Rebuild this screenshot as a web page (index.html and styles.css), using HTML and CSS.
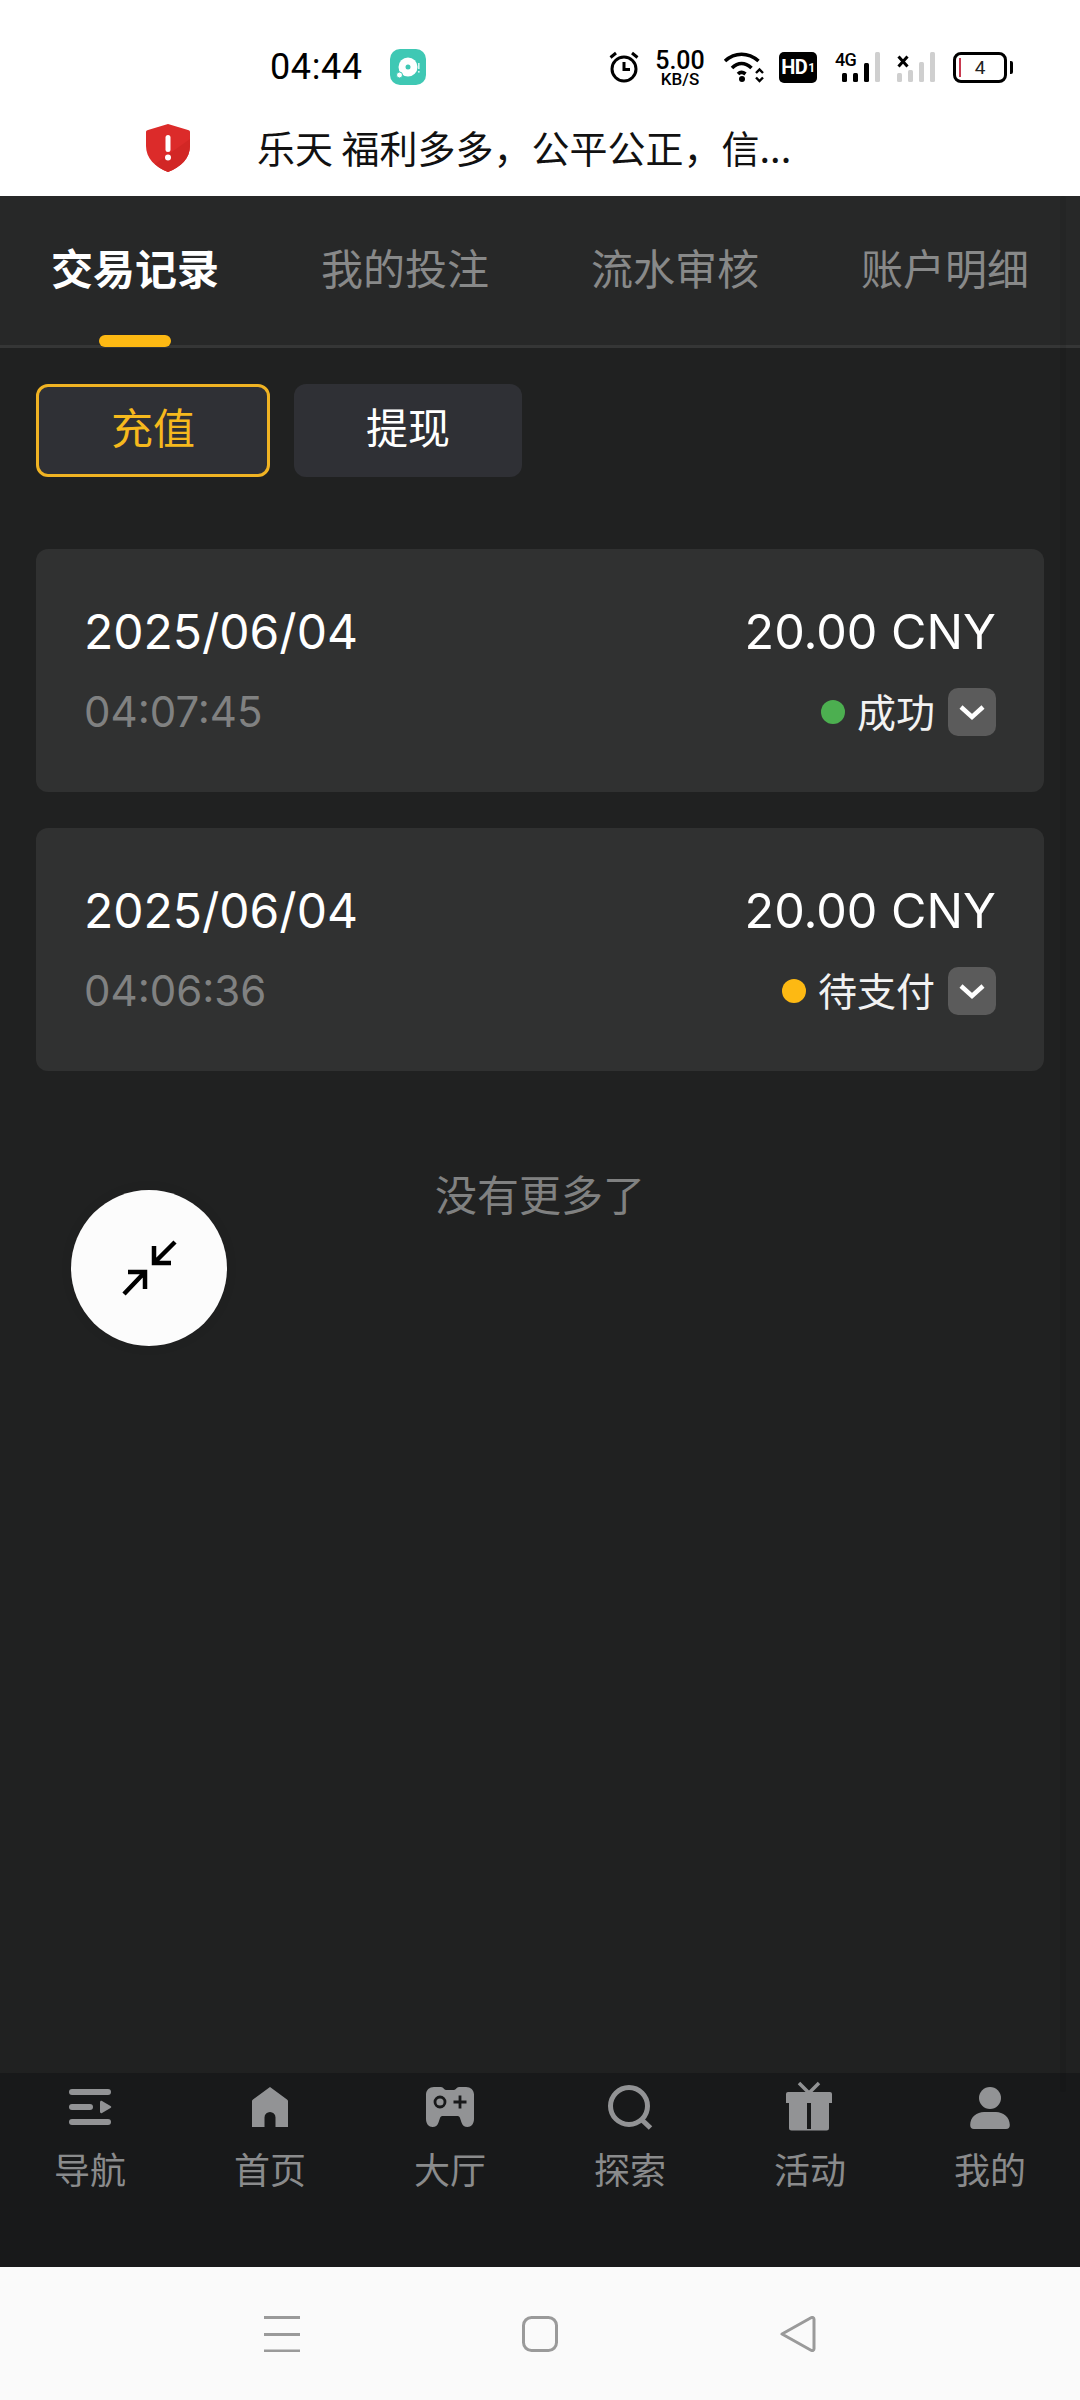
FILE: index.html
```html
<!DOCTYPE html>
<html lang="zh">
<head>
<meta charset="utf-8">
<title>交易记录</title>
<link rel="stylesheet" href="styles.css">
</head>
<body>
<div class="page">
  <header class="top">
    <div class="status">
      <div class="status-left">
        <span class="clock">04:44</span>
        <svg class="app-icon" viewBox="0 0 36 36"><rect width="36" height="36" rx="10" fill="#3fc8b4"/><circle cx="18" cy="18" r="9.5" fill="#fff"/><circle cx="18" cy="18" r="2.5" fill="#3fc8b4"/><circle cx="9.5" cy="26" r="3" fill="#fff" stroke="#3fc8b4" stroke-width="1"/><rect x="28" y="14" width="1.6" height="6" fill="#d8f5f0"/><rect x="28" y="22" width="1.6" height="1.6" fill="#d8f5f0"/></svg>
      </div>
      <div class="status-right">
        <svg class="i-alarm" viewBox="0 0 30 32"><circle cx="15" cy="18" r="12" fill="none" stroke="#000" stroke-width="3"/><path d="M15 11v7.5h6" fill="none" stroke="#000" stroke-width="3"/><path d="M1.5 6.500 7 2M28.500 6.500 23 2" stroke="#000" stroke-width="3"/></svg>
        <div class="speed"><span class="speed-n">5.00</span><span class="speed-u">KB/S</span></div>
        <svg class="i-wifi" viewBox="0 0 42 32"><path d="M2 10C12 1 25 1 35.500 10" fill="none" stroke="#000" stroke-width="3.600"/><path d="M9 17c6-6 13-6 19.500 0" fill="none" stroke="#000" stroke-width="3.600"/><path d="M15 23c2-2 5-2 7.500 0" fill="none" stroke="#000" stroke-width="3.600"/><circle cx="19" cy="28" r="3" fill="#000"/><path d="M33 22l3.500-3.500L40 22M33 26.500l3.500 3.500 3.500-3.500" fill="none" stroke="#000" stroke-width="2.400"/></svg>
        <div class="hd"><span>HD</span><span class="hd-1">1</span></div>
        <div class="sig">
          <span class="sig-4g">4G</span>
          <svg class="i-sig" viewBox="0 0 38 30"><rect x="0" y="21" width="5" height="9" rx="1.500"/><rect x="11" y="21" width="5" height="9" rx="1.500"/><rect x="22" y="11" width="5" height="19" rx="1.500"/><rect x="33" y="0" width="5" height="30" rx="1.500" fill="#cfcfcf"/></svg>
        </div>
        <svg class="i-sim2" viewBox="0 0 38 32"><path d="M1.500 5.500l9 10M10.500 5.500l-9 10" stroke="#000" stroke-width="3"/><rect x="0" y="22" width="5" height="9" rx="1.500" fill="#cfcfcf"/><rect x="11" y="19" width="5" height="12" rx="1.500" fill="#cfcfcf"/><rect x="22" y="11" width="5" height="20" rx="1.500" fill="#cfcfcf"/><rect x="33" y="1" width="5" height="30" rx="1.500" fill="#cfcfcf"/></svg>
        <div class="batt"><span class="batt-low"></span><span class="batt-n">4</span><span class="batt-cap"></span></div>
      </div>
    </div>
    <div class="notice">
      <svg class="shield" viewBox="0 0 44 48"><path d="M22 0l20 6c2 .6 2 1 2 3v13c0 12-9 21-22 26C9 43 0 34 0 22V9c0-2 0-2.400 2-3z" fill="#dc2b2a"/><path d="M44 15v7c0 12-9 21-22 26-5-2-9-4-13-8z" fill="#d22725"/><rect x="19.500" y="11" width="5" height="17" rx="2.500" fill="#fff"/><circle cx="22" cy="33.500" r="3" fill="#fff"/></svg>
      <span class="notice-text">乐天 福利多多，公平公正，信...</span>
    </div>
  </header>

  <nav class="tabs">
    <a class="tab tab-on">交易记录</a>
    <a class="tab">我的投注</a>
    <a class="tab">流水审核</a>
    <a class="tab">账户明细</a>
  </nav>

  <div class="subtabs">
    <button class="sub sub-on">充值</button>
    <button class="sub sub-off">提现</button>
  </div>

  <section class="cards">
    <article class="card">
      <div class="row"><span class="date">2025/06/04</span><span class="amount">20.00 CNY</span></div>
      <div class="row">
        <span class="time">04:07:45</span>
        <span class="state"><i class="dot dot-ok"></i><span class="state-t">成功</span><span class="chev"><svg viewBox="0 0 48 48"><path d="M13 19l11 10 11-10" fill="none" stroke="#fff" stroke-width="4.500"/></svg></span></span>
      </div>
    </article>
    <article class="card">
      <div class="row"><span class="date">2025/06/04</span><span class="amount">20.00 CNY</span></div>
      <div class="row">
        <span class="time">04:06:36</span>
        <span class="state"><i class="dot dot-wait"></i><span class="state-t">待支付</span><span class="chev"><svg viewBox="0 0 48 48"><path d="M13 19l11 10 11-10" fill="none" stroke="#fff" stroke-width="4.500"/></svg></span></span>
      </div>
    </article>
  </section>

  <p class="more">没有更多了</p>

  <nav class="bottom">
    <a class="item"><svg class="nav-i" viewBox="0 0 60 52"><rect x="9" y="8" width="42" height="6" rx="3"/><rect x="9" y="23" width="24" height="6" rx="3"/><path d="M40 21.500c0-1.500 1-2 2-1.500l8.500 5c1 .6 1 1.400 0 2L42 32c-1 .5-2 0-2-1.500z"/><rect x="9" y="38" width="42" height="6" rx="3"/></svg><span>导航</span></a>
    <a class="item"><svg class="nav-i" viewBox="0 0 60 52"><path fill-rule="evenodd" d="M30 6l17 12.500c.7.600 1 1 1 2V46H35.500v-9.500a5.500 5.500 0 0 0-11 0V46H12V20.500c0-1 .3-1.400 1-2z"/></svg><span>首页</span></a>
    <a class="item"><svg class="nav-i" viewBox="0 0 60 52"><path d="M14 6h7c2.500 0 3 3 5 3h8c2 0 2.500-3 5-3h7c4.500 0 8 3 8 7.500V38c0 5-3 8-6.500 8-3 0-5-1.500-6-4.500l-1.500-4.500c-.5-1.500-1.500-2-3-2H23c-1.500 0-2.500.5-3 2l-1.500 4.500c-1 3-3 4.500-6 4.500C9 46 6 43 6 38V13.500C6 9 9.500 6 14 6z"/><circle cx="20" cy="21" r="5" fill="none" stroke="#18191a" stroke-width="2.800"/><path d="M33.500 21h13M40 14.500v13" stroke="#18191a" stroke-width="2.800"/></svg><span>大厅</span></a>
    <a class="item"><svg class="nav-i" viewBox="0 0 60 52"><circle cx="29" cy="25" r="18.500" fill="none" stroke="#929395" stroke-width="5"/><path d="M41 38l9.500 9" stroke="#929395" stroke-width="5"/></svg><span>探索</span></a>
    <a class="item"><svg class="nav-i" viewBox="0 0 60 52"><path d="M19 2l10 10 10-10" fill="none" stroke="#929395" stroke-width="3.500"/><path d="M8 11h42a2 2 0 0 1 2 2v9H6v-9a2 2 0 0 1 2-2z"/><path d="M9 22h18v26h4V22h18v25a2.500 2.500 0 0 1-2.500 2.500h-35A2.500 2.500 0 0 1 9 47z"/></svg><span>活动</span></a>
    <a class="item"><svg class="nav-i" viewBox="0 0 60 52"><circle cx="30" cy="17" r="11"/><path d="M14 48h32a4 4 0 0 0 3.800-4c0-8-7-13-13.800-13H24c-7 0-13.800 5-13.800 13a4 4 0 0 0 3.800 4z"/></svg><span>我的</span></a>
  </nav>

  <footer class="sysbar">
    <svg class="sys-i" viewBox="0 0 36 36"><path d="M0 1.500h36M0 18.500h36M0 35h36" stroke="#9a9a9a" stroke-width="3" fill="none"/></svg>
    <svg class="sys-i" viewBox="0 0 36 36"><rect x="1.500" y="1.500" width="33" height="33" rx="8" fill="none" stroke="#9a9a9a" stroke-width="3"/></svg>
    <svg class="sys-i" viewBox="0 0 36 36"><path d="M2 18L31 1.800c1.500-.8 3-.2 3 1.500v29.400c0 1.700-1.500 2.300-3 1.500z" fill="none" stroke="#9a9a9a" stroke-width="3" stroke-linejoin="round"/></svg>
  </footer>

  <div class="scroll-strip"></div>
  <button class="float" aria-label="收起"><svg viewBox="0 0 80 80"><path d="M66 14L45 35M45 18v17h17M36 44L15 66M19 44h17v17" fill="none" stroke="#000" stroke-width="4.500"/></svg></button>
</div>
</body>
</html>
```

FILE: styles.css
```css
* { box-sizing: border-box; }
html, body { margin: 0; padding: 0; }
body { font-family: "Inter", "Noto Sans CJK SC", sans-serif; background: #202121; }
.page { position: relative; width: 1080px; height: 2400px; display: flex; flex-direction: column; overflow: hidden; background: #202121; }

.top { height: 196px; background: #fff; color: #000; flex: none; }
.status { height: 100px; padding: 34px 69px 0 270px; display: flex; justify-content: space-between; align-items: center; }
.status-left { display: flex; align-items: center; gap: 27px; }
.clock { font-family: "Roboto", sans-serif; font-size: 36px; letter-spacing: .6px; }
.app-icon { width: 36px; height: 36px; display: block; }
.status-right { display: flex; align-items: center; }
.i-alarm { width: 30px; height: 32px; margin-right: 13px; }
.speed { width: 56px; margin-right: 15px; display: flex; flex-direction: column; align-items: center; }
.speed-n { font: 500 25px/23px "Roboto", sans-serif; }
.speed-u { font: 500 17px/14px "Roboto", sans-serif; }
.i-wifi { width: 42px; height: 32px; margin-right: 14px; }
.hd { width: 38px; height: 31px; margin-right: 18px; background: #000; color: #fff; border-radius: 5px; display: flex; align-items: center; justify-content: center; font: 700 20px/31px "Roboto", sans-serif; letter-spacing: -.5px; }
.hd-1 { font-size: 12px; margin-left: 1px; margin-top: 3px; }
.sig { position: relative; width: 45px; height: 32px; margin-right: 17px; display: flex; justify-content: flex-end; }
.sig-4g { position: absolute; left: 0; top: -1px; font: 500 18px/20px "Roboto", sans-serif; letter-spacing: -.8px; }
.i-sig { width: 38px; height: 30px; margin-top: 1px; fill: #000; }
.i-sim2 { width: 38px; height: 32px; margin-right: 18px; }
.batt { position: relative; width: 54px; height: 31px; border: 3px solid #000; border-radius: 8px; display: flex; align-items: center; justify-content: center; margin-right: 4px; }
.batt-low { position: absolute; left: 3px; top: 3px; bottom: 3px; width: 2px; background: #c8394f; }
.batt-n { font: 400 19px/1 "Roboto", sans-serif; color: #222; }
.batt-cap { position: absolute; right: -9px; top: 6px; width: 3px; height: 13px; background: #000; border-radius: 0 2px 2px 0; }
.notice { height: 96px; padding: 0 0 0 146px; display: flex; align-items: center; }
.shield { width: 44px; height: 48px; margin-right: 67px; margin-top: 0; }
.notice-text { font-size: 38px; line-height: 48px; color: #111; font-family: "Noto Sans CJK SC", sans-serif; margin-top: -2px; }

.tabs { flex: none; height: 152px; display: flex; gap: 102px; padding: 0 0 8px 51px; align-items: center; background: #272828; border-bottom: 3px solid #353636; }
.tab { position: relative; font-size: 42px; line-height: 56px; color: #888989; font-family: "Noto Sans CJK SC", sans-serif; }
.tab-on { color: #fff; font-weight: 700; }
.tab-on::after { content: ""; position: absolute; left: 48px; top: 96px; width: 72px; height: 12px; border-radius: 6px; background: #fdb913; }

.subtabs { flex: none; display: flex; gap: 24px; padding: 36px 0 0 36px; }
.sub { height: 93px; border-radius: 12px; background: #2f3035; font: 400 42px/1 "Noto Sans CJK SC", sans-serif; color: #fff; padding: 0 0 9px; border: 0; }
.sub-on { width: 234px; border: 3px solid #f0b323; color: #f6b91d; }
.sub-off { width: 228px; }

.cards { flex: none; display: flex; flex-direction: column; gap: 36px; padding: 72px 36px 0; }
.card { height: 243px; border-radius: 12px; background: #303131; padding: 54px 48px 0; display: flex; flex-direction: column; gap: 22px; }
.row { display: flex; justify-content: space-between; align-items: center; height: 58px; }
.date { font-size: 48px; line-height: 58px; color: #fff; }
.amount { font-size: 48.500px; line-height: 58px; color: #fff; }
.time { font-size: 42px; line-height: 58px; color: #808181; }
.state { display: flex; align-items: center; }
.dot { width: 24px; height: 24px; border-radius: 50%; margin-right: 12px; }
.dot-ok { background: #4caf50; }
.dot-wait { background: #fdb913; }
.state-t { font: 400 39px/48px "Noto Sans CJK SC", sans-serif; color: #f2f2f2; margin: -4px 13px 0 0; }
.chev { width: 48px; height: 48px; border-radius: 10px; background: #5b5b5b; }
.chev svg { display: block; width: 48px; height: 48px; }

.more { flex: none; margin: 92px 0 0; text-align: center; font: 400 42px/60px "Noto Sans CJK SC", sans-serif; color: #808181; }

.bottom { margin-top: auto; flex: none; height: 194px; background: #18191a; display: grid; grid-template-columns: repeat(6, 180px); padding-top: 8px; }
.item { display: flex; flex-direction: column; align-items: center; color: #8a8b8c; font: 400 36px/48px "Noto Sans CJK SC", sans-serif; }
.nav-i { width: 60px; height: 52px; fill: #929395; overflow: visible; margin-bottom: 11px; }

.sysbar { flex: none; height: 133px; background: #fafafa; display: flex; justify-content: center; gap: 222px; align-items: center; padding-bottom: 0; }
.sys-i { width: 36px; height: 36px; display: block; }

.scroll-strip { position: absolute; left: 1060px; top: 196px; width: 6px; height: 1896px; border-radius: 3px; background: rgba(0,0,0,.07); }
.float { position: absolute; left: 71px; top: 1190px; width: 156px; height: 156px; border-radius: 50%; background: #fcfcfc; border: 0; padding: 38px; box-shadow: 0 0 12px rgba(0,0,0,.08); }
.float svg { display: block; width: 80px; height: 80px; }
```
